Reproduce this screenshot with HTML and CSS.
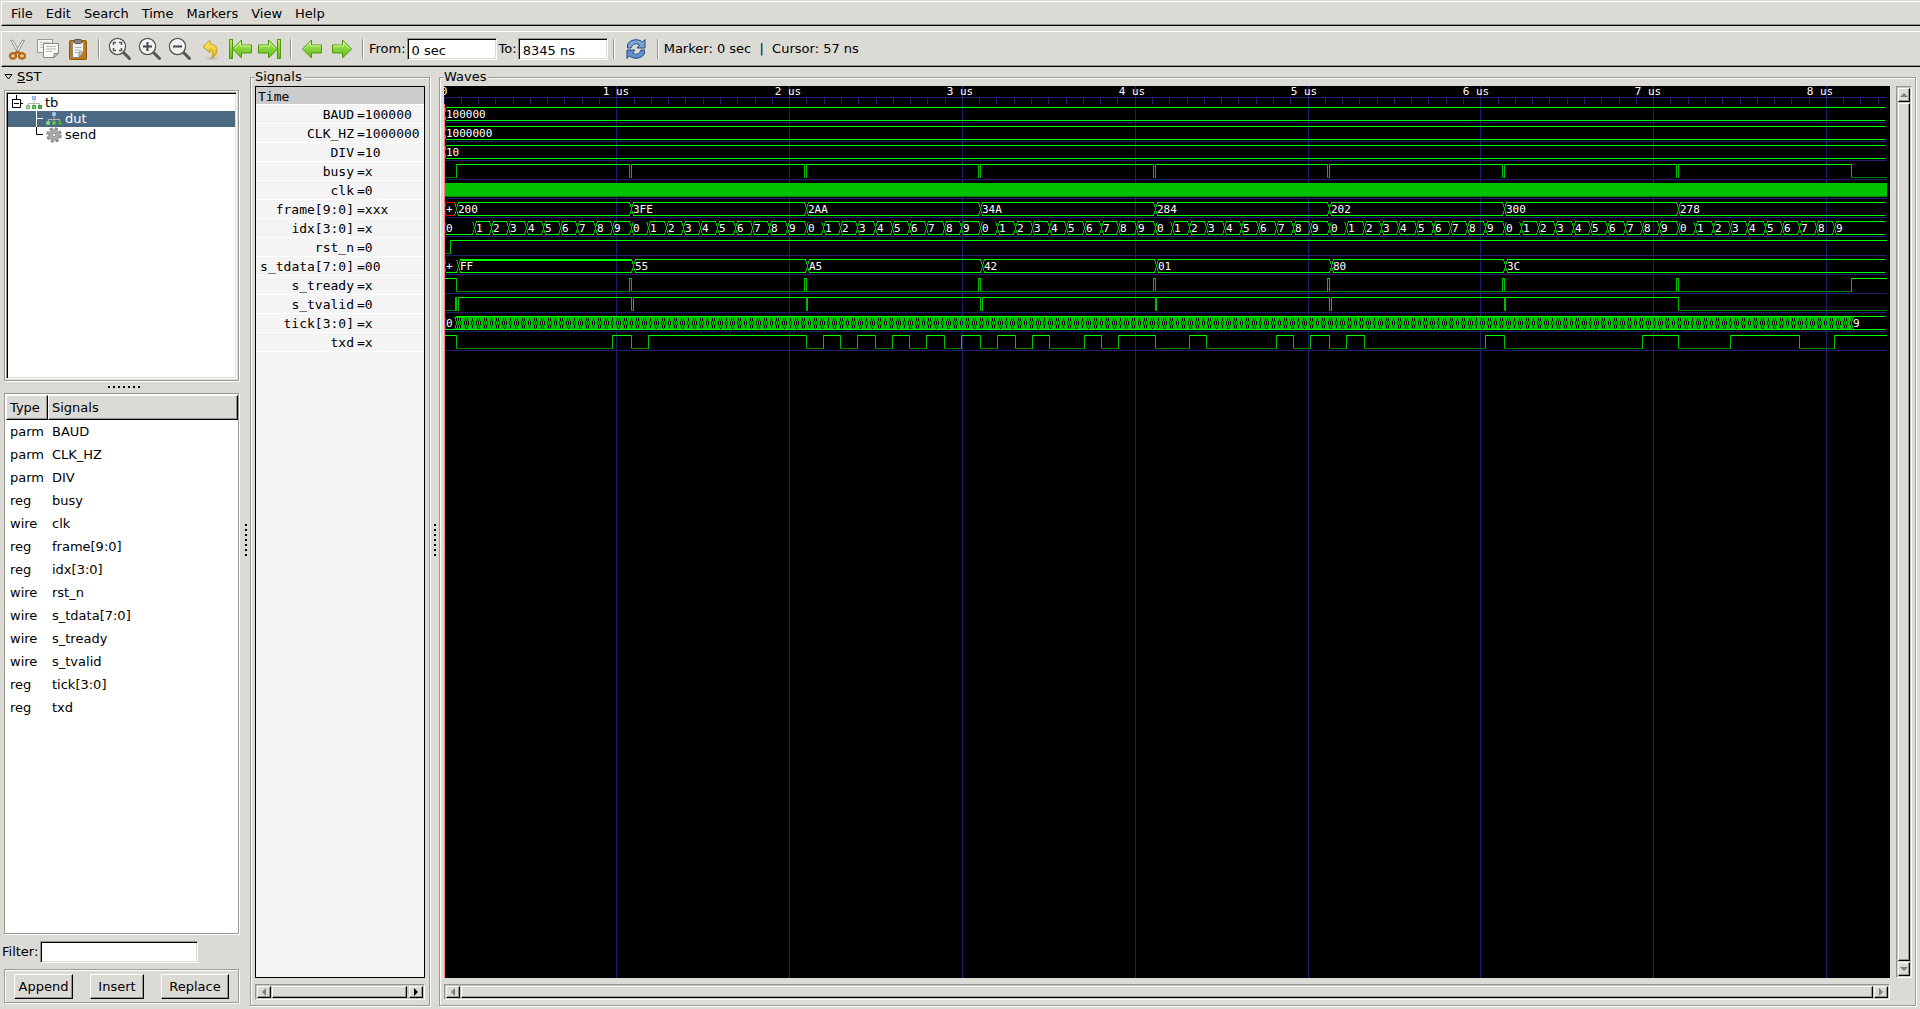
FILE: index.html
```html
<!DOCTYPE html>
<html lang="en">
<head>
    <meta charset="UTF-8">
    <title>GTKWave</title>
    <link rel="stylesheet" href="styles.css">
</head>
<body>

<!-- shared icon shapes -->
<svg class="defs" aria-hidden="true">
    <defs>
        <linearGradient id="green" x1="0" y1="0" x2="0" y2="1">
            <stop offset="0" stop-color="#b4f05c"/>
            <stop offset="1" stop-color="#5cb81c"/>
        </linearGradient>
        <linearGradient id="gold" x1="0" y1="0" x2="0" y2="1">
            <stop offset="0" stop-color="#fdf07c"/>
            <stop offset="1" stop-color="#e0a800"/>
        </linearGradient>
        <symbol id="arrow" viewBox="0 0 24 24">
            <path d="M2.500 12 L11.500 3 V8 H21.500 V16 H11.500 V21 Z" fill="url(#green)" stroke="#4e9a06"/>
            <path d="M4.500 11.500 L10.500 5.500 V9 H20.500" fill="none" stroke="#d4f8a0"/>
        </symbol>
        <symbol id="lens" viewBox="0 0 24 24">
            <path d="M15 15 L21.500 21.500" stroke="#555753" stroke-width="3" stroke-linecap="round"/>
            <circle cx="9.500" cy="9.500" r="8" fill="#f0f0ee" stroke="#555753" stroke-width="1.500"/>
            <circle cx="9.500" cy="9.500" r="6.700" fill="none" stroke="#fff"/>
        </symbol>
        <symbol id="tree" viewBox="0 0 16 16">
            <path d="M8 5 V8 M2.500 10 V8.500 H13.500 V10 M8 8 V10" fill="none" stroke="#b4b6b2"/>
            <rect x="6.500" y="1.500" width="3" height="3" fill="#b4d4f8" stroke="#8cb4e4"/>
            <rect x="0.500" y="10.500" width="3" height="3" fill="#a4dc94" stroke="#74bc6c"/>
            <rect x="6.500" y="10.500" width="3" height="3" fill="#74c46c" stroke="#4ca44c"/>
            <rect x="12.500" y="10.500" width="3" height="3" fill="#54b454" stroke="#3c943c"/>
        </symbol>
    </defs>
</svg>

<nav class="menubar">
    <button>File</button>
    <button>Edit</button>
    <button>Search</button>
    <button>Time</button>
    <button>Markers</button>
    <button>View</button>
    <button>Help</button>
</nav>

<div class="toolbar">
    <button class="tool" aria-label="Cut">
        <svg viewBox="0 0 24 24">
            <path d="M4.500 3 L7 3.500 L14.500 16 L12.500 17 Z" fill="#eee" stroke="#999b97"/>
            <path d="M18.500 3 L16 3.500 L9 16 L11 17 Z" fill="#fff" stroke="#888a85"/>
            <ellipse cx="7" cy="19" rx="3" ry="2.700" fill="none" stroke="#b86c10" stroke-width="2.500"/>
            <ellipse cx="16" cy="19" rx="3" ry="2.700" fill="none" stroke="#b86c10" stroke-width="2.500"/>
            <path d="M9 16.500 L11.500 14.500 L14 16.500" fill="none" stroke="#b86c10" stroke-width="2"/>
        </svg>
    </button>
    <button class="tool" aria-label="Copy">
        <svg viewBox="0 0 24 24">
            <rect x="1.500" y="2.500" width="15" height="13" fill="#f4f4f2" stroke="#999b97"/>
            <path d="M4 5.500 H14 M4 8 H14 M4 10.500 H14" stroke="#c4c6c2"/>
            <path d="M7.500 6.500 H22.500 V16.500 L18 20.500 H7.500 Z" fill="#f8f8f6" stroke="#888a85"/>
            <path d="M10 9.500 H20 M10 12 H20 M10 14.500 H16" stroke="#b4b6b2"/>
            <path d="M22.500 16.500 H18 V20.500 Z" fill="#ccc" stroke="#888a85"/>
        </svg>
    </button>
    <button class="tool" aria-label="Paste">
        <svg viewBox="0 0 24 24">
            <rect x="3.500" y="3.500" width="17" height="19" rx="1" fill="#c07818" stroke="#8f5902"/>
            <path d="M6.500 5.500 H17.500 V15 L13 20.500 H6.500 Z" fill="#f4f4f2" stroke="#888a85"/>
            <rect x="8.500" y="2.500" width="7" height="4" rx="1" fill="#888a85" stroke="#555753"/>
            <path d="M9 10.500 H15.500 M9 13 H15.500 M9 15.500 H12" stroke="#b4b6b2"/>
            <path d="M17.500 15 H13 V20.500 Z" fill="#ccc" stroke="#888a85"/>
        </svg>
    </button>
    <span class="sep"></span>
    <button class="tool" aria-label="Zoom fit">
        <svg viewBox="0 0 24 24">
            <use href="#lens"/>
            <path d="M5.500 8 V5.500 H8 M11 5.500 H13.500 V8 M13.500 11 V13.500 H11 M8 13.500 H5.500 V11" fill="none" stroke="#555753" stroke-width="1.500"/>
        </svg>
    </button>
    <button class="tool" aria-label="Zoom in">
        <svg viewBox="0 0 24 24">
            <use href="#lens"/>
            <path d="M5 9.500 H14 M9.500 5 V14" stroke="#44464a" stroke-width="2"/>
        </svg>
    </button>
    <button class="tool" aria-label="Zoom out">
        <svg viewBox="0 0 24 24">
            <use href="#lens"/>
            <path d="M5 9.500 H14" stroke="#44464a" stroke-width="2"/>
        </svg>
    </button>
    <button class="tool" aria-label="Undo zoom">
        <svg viewBox="0 0 24 24">
            <ellipse cx="14" cy="21.500" rx="6" ry="1.500" fill="#c4c2bc"/>
            <path d="M5 9.500 L12 3.500 V7 C18 7 20 12 18.500 16 C17.500 19 15 20.500 13 21 C15.500 17.500 15.500 12.500 12 12.500 V16 Z" fill="url(#gold)" stroke="#c89c10"/>
        </svg>
    </button>
    <button class="tool" aria-label="Zoom to start">
        <svg viewBox="0 0 24 24">
            <rect x="1.500" y="2.500" width="3" height="19" fill="url(#green)" stroke="#4e9a06"/>
            <use href="#arrow" x="2"/>
        </svg>
    </button>
    <button class="tool" aria-label="Zoom to end">
        <svg viewBox="0 0 24 24">
            <g transform="matrix(-1 0 0 1 24 0)">
                <rect x="1.500" y="2.500" width="3" height="19" fill="url(#green)" stroke="#4e9a06"/>
                <use href="#arrow" x="2"/>
            </g>
        </svg>
    </button>
    <span class="sep"></span>
    <button class="tool" aria-label="Find previous edge">
        <svg viewBox="0 0 24 24"><use href="#arrow"/></svg>
    </button>
    <button class="tool" aria-label="Find next edge">
        <svg viewBox="0 0 24 24"><use href="#arrow" transform="matrix(-1 0 0 1 24 0)"/></svg>
    </button>
    <span class="sep"></span>
    <label for="from">From:</label>
    <input class="entry" id="from" type="text" value="0 sec">
    <label class="to" for="to">To:</label>
    <input class="entry" id="to" type="text" value="8345 ns">
    <span class="sep"></span>
    <button class="tool reload" aria-label="Reload">
        <svg viewBox="0 0 24 24">
            <path d="M3.500 11 V8 C5 2.500 14 1 18.500 5 L21 2.500 V11 H13 L15.500 8 C12 5.500 8.500 7 7 11 Z" fill="#7ca4d4" stroke="#204a87"/>
            <path d="M20.500 13 V16 C19 21.500 10 23 5.500 19 L3 21.500 V13 H11 L8.500 16 C12 18.500 15.500 17 17 13 Z" fill="#6490c8" stroke="#204a87"/>
        </svg>
    </button>
    <span class="sep"></span>
    <span class="status">Marker: 0 sec&nbsp; |&nbsp; Cursor: 57 ns</span>
</div>

<main class="panes">
    <section class="side">
        <button class="expander">
            <svg viewBox="0 0 9 8"><path d="M1 1.500 H8 L4.500 6 Z" fill="#dcdad5" stroke="#000"/></svg>
            <span><u>S</u>ST</span>
        </button>
        <div class="frame tree_frame">
            <div class="tree">
                <div class="node">
                    <svg class="lines" viewBox="0 0 17 16"><path d="M7.500 0 V4 M3.500 4.500 H11.500 V12.500 H3.500 V4 M5 8.500 H10 M12 8.500 H14" fill="none" stroke="#000"/></svg>
                    <svg class="icon"><use href="#tree"/></svg>
                    <span>tb</span>
                </div>
                <div class="node child selected">
                    <svg class="lines" viewBox="0 0 17 16"><path d="M7.500 0 V16 M8 7.500 H14" fill="none" stroke="#fff"/></svg>
                    <svg class="icon"><use href="#tree"/></svg>
                    <span>dut</span>
                </div>
                <div class="node child">
                    <svg class="lines" viewBox="0 0 17 16"><path d="M7.500 0 V7.500 H14" fill="none" stroke="#000"/></svg>
                    <svg class="icon" viewBox="0 0 16 16">
                        <circle cx="8" cy="8" r="6.500" fill="none" stroke="#888a85" stroke-width="2.500" stroke-dasharray="3.100 2"/>
                        <circle cx="8" cy="8" r="4.500" fill="#c4c4c2" stroke="#a4a6a0" stroke-width="3"/>
                        <circle cx="8" cy="8" r="2" fill="#f4f4f2" stroke="#777"/>
                    </svg>
                    <span>send</span>
                </div>
            </div>
        </div>
        <div class="grip horizontal"></div>
        <div class="frame list_frame">
            <table class="list">
                <thead>
                    <tr><th class="type">Type</th><th>Signals</th></tr>
                </thead>
                <tbody>
                    <tr><td>parm</td><td>BAUD</td></tr>
                    <tr><td>parm</td><td>CLK_HZ</td></tr>
                    <tr><td>parm</td><td>DIV</td></tr>
                    <tr><td>reg</td><td>busy</td></tr>
                    <tr><td>wire</td><td>clk</td></tr>
                    <tr><td>reg</td><td>frame[9:0]</td></tr>
                    <tr><td>reg</td><td>idx[3:0]</td></tr>
                    <tr><td>wire</td><td>rst_n</td></tr>
                    <tr><td>wire</td><td>s_tdata[7:0]</td></tr>
                    <tr><td>wire</td><td>s_tready</td></tr>
                    <tr><td>wire</td><td>s_tvalid</td></tr>
                    <tr><td>reg</td><td>tick[3:0]</td></tr>
                    <tr><td>reg</td><td>txd</td></tr>
                </tbody>
            </table>
        </div>
        <div class="filter">
            <label for="filter">Filter:</label>
            <input class="entry" id="filter" type="text">
        </div>
        <div class="frame actions">
            <button class="btn append">Append</button>
            <button class="btn insert">Insert</button>
            <button class="btn replace">Replace</button>
        </div>
    </section>

    <div class="grip vertical first"></div>

    <section class="frame panel signals">
        <h2>Signals</h2>
        <div class="names">
            <div class="time">Time</div>
            <div class="row"><span>BAUD</span><span>=100000</span></div>
            <div class="row"><span>CLK_HZ</span><span>=1000000</span></div>
            <div class="row"><span>DIV</span><span>=10</span></div>
            <div class="row"><span>busy</span><span>=x</span></div>
            <div class="row"><span>clk</span><span>=0</span></div>
            <div class="row"><span>frame[9:0]</span><span>=xxx</span></div>
            <div class="row"><span>idx[3:0]</span><span>=x</span></div>
            <div class="row"><span>rst_n</span><span>=0</span></div>
            <div class="row"><span>s_tdata[7:0]</span><span>=00</span></div>
            <div class="row"><span>s_tready</span><span>=x</span></div>
            <div class="row"><span>s_tvalid</span><span>=0</span></div>
            <div class="row"><span>tick[3:0]</span><span>=x</span></div>
            <div class="row"><span>txd</span><span>=x</span></div>
        </div>
        <div class="scroll">
            <button class="step off" aria-label="Left"><svg viewBox="0 0 8 8"><path d="M6 0 V8 L2 4 Z"/></svg></button>
            <div class="thumb short"></div>
            <button class="step" aria-label="Right"><svg viewBox="0 0 8 8"><path d="M2 0 V8 L6 4 Z"/></svg></button>
        </div>
    </section>

    <div class="grip vertical"></div>

    <section class="frame panel waves">
        <h2>Waves</h2>
        <div class="wave_row">
            <svg class="canvas" id="canvas"></svg>
            <div class="scroll upright">
                <button class="step off" aria-label="Up"><svg viewBox="0 0 8 8"><path d="M0 6 H8 L4 2 Z"/></svg></button>
                <div class="thumb"></div>
                <button class="step off" aria-label="Down"><svg viewBox="0 0 8 8"><path d="M0 2 H8 L4 6 Z"/></svg></button>
            </div>
        </div>
        <div class="scroll">
            <button class="step off" aria-label="Left"><svg viewBox="0 0 8 8"><path d="M6 0 V8 L2 4 Z"/></svg></button>
            <div class="thumb"></div>
            <button class="step off" aria-label="Right"><svg viewBox="0 0 8 8"><path d="M2 0 V8 L6 4 Z"/></svg></button>
        </div>
    </section>
</main>

<script src="waves.js"></script>
</body>
</html>
```

FILE: styles.css
```css
* {
    box-sizing: border-box;
}
body {
    margin: 0;
    height: 100vh;
    display: flex;
    flex-direction: column;
    padding: 1px 0 3px 0;
    background: #dcdad5;
    color: #000;
    font: 13px/16px "DejaVu Sans", sans-serif;
    overflow: hidden;
}
button, input {
    font: inherit;
    color: inherit;
    margin: 0;
    padding: 0;
    border: 0;
    border-radius: 0;
    background: none;
}
svg {
    display: block;
}
.defs {
    position: absolute;
    width: 0;
    height: 0;
}

/* menu and tool bars */
.menubar, .toolbar {
    display: flex;
    align-items: center;
    margin-left: 1px;
    border-top: 1px solid #fff;
    border-left: 1px solid #fff;
    border-bottom: 1px solid #000;
    box-shadow: inset 0 -1px #96948e;
}
.menubar {
    height: 25px;
    padding-left: 3px;
}
.menubar button {
    padding: 0 7px 0 6px;
    line-height: 22px;
}
.toolbar {
    height: 36px;
    margin-top: 5px;
    padding-left: 1px;
}
.toolbar label {
    padding-right: 1px;
}
.tool {
    width: 30px;
    display: flex;
    justify-content: center;
}
.tool svg {
    width: 24px;
    height: 24px;
}
.reload {
    width: 32px;
}
.sep {
    width: 2px;
    height: 20px;
    margin: 0 5px;
    border-left: 1px solid #96948e;
    border-right: 1px solid #fff;
}
.entry {
    width: 90px;
    height: 22px;
    padding: 2px 4px 0 4px;
    background: #fff;
    border: 1px solid;
    border-color: #96948e #fff #fff #96948e;
    box-shadow: inset 1px 1px #000, inset -1px -1px #dcdad5;
}
.to {
    padding-left: 2px;
}

/* etched frame */
.frame {
    position: relative;
    border: 1px solid #9c9a94;
    box-shadow: 1px 1px #fff, inset 1px 1px #fff;
}
.panes {
    flex: 1;
    min-height: 0;
    display: flex;
    padding: 3px 4px 0 4px;
}
.side {
    width: 235px;
    display: flex;
    flex-direction: column;
    padding-bottom: 3px;
}
.expander {
    display: flex;
    align-items: center;
    gap: 4px;
    height: 20px;
    line-height: 14px;
    padding-bottom: 6px;
}
.expander svg {
    width: 9px;
    height: 8px;
}
.tree_frame {
    height: 291px;
    padding: 1px;
}
.tree {
    height: 100%;
    padding: 2px 1px 1px 1px;
    background: #fff;
    border: 1px solid;
    border-color: #96948e #fff #fff #96948e;
    box-shadow: inset 1px 1px #000, inset -1px -1px #dcdad5;
}
.node {
    display: flex;
    align-items: center;
    height: 16px;
    padding-left: 1px;
}
.node svg {
    height: 16px;
}
.lines {
    width: 17px;
}
.icon {
    width: 16px;
    margin-right: 3px;
}
.child {
    padding-left: 21px;
}
.selected {
    background: #4b6983;
    color: #fff;
}
.list_frame {
    flex: 1;
    padding: 1px 0 0 1px;
    background: #fff;
}
.list {
    width: 100%;
    border-spacing: 0;
}
.list th {
    height: 25px;
    padding: 0 0 0 3px;
    font-weight: normal;
    text-align: left;
    background: #dcdad5;
    border: 1px solid;
    border-color: #fff #000 #000 #fff;
    box-shadow: inset -1px -1px #96948e;
}
.list .type {
    width: 42px;
}
.list td {
    height: 23px;
    padding: 0 0 0 4px;
}
.filter {
    display: flex;
    align-items: center;
    gap: 2px;
    margin: 7px 0 6px -2px;
}
.filter .entry {
    width: 158px;
}
.actions {
    display: flex;
    height: 34px;
    padding: 4px 9px;
    justify-content: space-between;
}
.btn {
    height: 25px;
    border: 1px solid;
    border-color: #fff #000 #000 #fff;
    box-shadow: inset -1px -1px #96948e;
}
.append {
    width: 59px;
}
.insert {
    width: 54px;
}
.replace {
    width: 68px;
}

/* pane handles */
.grip {
    flex: none;
}
.grip::before {
    content: '';
    display: block;
}
.vertical {
    width: 9px;
    padding-top: 3px;
    display: flex;
    align-items: center;
    justify-content: center;
}
.first {
    width: 11px;
    padding-left: 2px;
}
.vertical::before {
    width: 2px;
    height: 32px;
    background: repeating-linear-gradient(#000 0 2px, transparent 2px 5px);
}
.horizontal {
    height: 12px;
    padding: 5px 0 0 4px;
}
.horizontal::before {
    width: 32px;
    height: 2px;
    margin: 0 auto;
    background: repeating-linear-gradient(90deg, #000 0 2px, transparent 2px 5px);
}

/* signals and waves */
.panel {
    display: flex;
    flex-direction: column;
    gap: 6px;
    margin-top: 7px;
    padding: 8px 4px 5px 4px;
}
.panel h2 {
    position: absolute;
    top: -9px;
    left: 4px;
    margin: 0;
    padding-right: 2px;
    font: inherit;
    background: #dcdad5;
}
.signals {
    width: 180px;
}
.waves {
    flex: 1;
    min-width: 0;
    padding-right: 3px;
}
.names {
    flex: 1;
    border: 1px solid #000;
    background: #f4f4f4;
    font-family: "DejaVu Sans Mono", monospace;
}
.time {
    height: 18px;
    padding-left: 2px;
    line-height: 20px;
    background: #ccc;
    border-bottom: 1px solid #fff;
}
.row {
    display: grid;
    grid-template-columns: 98px 1fr;
    gap: 3px;
    height: 19px;
    line-height: 20px;
    border-bottom: 1px solid #fff;
}
.row span:first-child {
    text-align: right;
}
.wave_row {
    flex: 1;
    min-height: 0;
    display: flex;
    gap: 6px;
}
.canvas {
    flex: 1;
    min-width: 0;
    height: 100%;
    background: #000;
    fill: #fff;
    font: 11px "DejaVu Sans Mono", monospace;
}
.scroll {
    display: flex;
    height: 16px;
    padding: 1px;
    gap: 1px;
    background: #c8c6c0;
    border: 1px solid;
    border-color: #96948e #fff #fff #96948e;
}
.upright {
    flex-direction: column;
    width: 16px;
    height: auto;
}
.waves > .scroll {
    margin-right: 22px;
}
.step, .thumb {
    background: #dcdad5;
    border: 1px solid;
    border-color: #fff #000 #000 #fff;
    box-shadow: inset -1px -1px #96948e;
}
.step {
    flex: none;
    width: 14px;
    height: 100%;
    display: flex;
    align-items: center;
    justify-content: center;
}
.step svg {
    width: 8px;
    height: 8px;
}
.off {
    fill: #807e78;
}
.upright .step {
    width: 100%;
    height: 14px;
}
.thumb {
    flex: 1;
}
.short {
    margin-right: 1px;
}
```

FILE: waves.js
```js
const canvas = document.getElementById('canvas');
const SCALE = 0.1728;   // pixels per ns
const END = 1443;       // last drawn column
const ROW = 19;
const frames = ['200', '3FE', '2AA', '34A', '284', '202', '300', '278'];
const bytes = ['FF', '55', 'A5', '42', '01', '80', '3C'];

const GRID = '#202070', HI = '#00ff00', EDGE = '#00c000', LO = '#008000', RED = '#ff0000';

let paths = {}, order = [], texts = [];

function px(t) {
    return Math.floor(t * SCALE);
}
function box(color, x, y, w, h) {
    if (!paths[color]) {
        paths[color] = '';
        order.push(color);
    }
    paths[color] += 'M' + x + ' ' + y + 'h' + w + 'v' + h + 'h' + -w + 'z';
}
function text(x, y, str, anchor) {
    texts.push('<text x="' + x + '" y="' + y + '" text-anchor="' + (anchor || 'start') + '">' + str + '</text>');
}
function rowTop(row) {
    return 21 + row * ROW;
}
// edges is a list of times where the level flips
function bit(row, level, edges) {
    let x = 1, y = rowTop(row);
    for (const t of edges.concat(null)) {
        let next = t === null ? END : px(t);
        box(level ? HI : LO, x, level ? y : y + 13, next - x, 1);
        if (t !== null) {
            box(EDGE, next, y, 1, 14);
        }
        level = !level;
        x = next;
    }
}
function cross(x, y, color) {
    for (const s of [-1, 1]) {
        box(color, x + 2 * s, y + 1, 1, 1);
        box(color, x + s, y + 2, 1, 3);
        box(color, x + s, y + 9, 1, 3);
        box(color, x + 2 * s, y + 12, 1, 1);
    }
    box(color, x, y + 5, 1, 4);
}
// values: [time, text, kind]
function bus(row, values) {
    const y = rowTop(row);
    values.forEach(function (v, i) {
        const last = i === values.length - 1;
        const a = px(v[0]), b = last ? END - 1 : px(values[i + 1][0]);
        const color = v[2] === 'x' ? RED : HI;
        box(color, a + 2, y + 13, b - a - 3, 1);
        if (v[2] !== 'zero') {
            box(color, a + 2, y, b - a - 3, v[2] === 'ones' ? 2 : 1);
        }
        if (i) {
            cross(a, y, EDGE);
        } else {
            box(v[2] ? RED : EDGE, 1, y + 1, 1, 4);
            box(v[2] ? RED : EDGE, 1, y + 9, 1, 4);
        }
        text(a + 2, y + 11, v[1]);
    });
}

// time axis, labels sit on a rounded step so they drift off the lines
box(GRID, 0, 11, END, 1);
for (let t = 0; t <= 8300; t += 100) {
    box(GRID, px(t), 11, 1, 7);
}
for (let us = 0; us <= 8; us++) {
    box(GRID, px(us * 1000), us ? 0 : 11, 1, us ? 2000 : 7);
    text(us * 172, 9, us ? us + ' us' : '0', 'middle');
}
for (let r = 0; r < 13; r++) {
    box(GRID, 1, rowTop(r) + 15, END - 1, 1);
}

const start = frames.map((f, i) => 75 + 1010 * i);

bus(0, [[0, '100000']]);
bus(1, [[0, '1000000']]);
bus(2, [[0, '10']]);

let ready = [75];
start.slice(1).forEach(s => ready.push(s - 10, s));
ready.push(8145);
bit(3, 0, ready);

// clk is denser than a pixel
box(EDGE, 1, rowTop(4), END - 1, 14);
box(HI, 1, rowTop(4), END - 1, 1);
box(LO, 1, rowTop(4) + 13, END - 1, 1);

bus(5, [[0, '+', 'x']].concat(frames.map((f, i) => [start[i], f])));

let idx = [[0, '0', 'zero']];
start.forEach(function (s, i) {
    for (let k = i ? 0 : 1; k < 10; k++) {
        idx.push([s + 100 * k, String(k), k ? '' : 'zero']);
    }
});
bus(6, idx);
bit(7, 0, [37]);
bus(8, [[0, '+', 'zero']].concat(bytes.map((b, i) => [start[i] + 10, b, i ? '' : 'ones'])));
bit(9, 1, ready);

let valid = [65, 75, 85];
start.slice(1, 7).forEach(s => valid.push(s, s + 10));
valid.push(start[7]);
bit(10, 0, valid);

// tick counts every clock, so the crossings run together
const ty = rowTop(11);
box(HI, 1, ty + 13, 1440, 1);
box(HI, 12, ty, 1429, 1);
box(RED, 1, ty + 1, 1, 4);
box(RED, 1, ty + 9, 1, 4);
text(2, ty + 11, '0');
for (let t = 75; t <= 8145; t += 10) {
    cross(px(t), ty, EDGE);
    box(EDGE, px(t) - 1, ty + 1, 1, 1);
    box(EDGE, px(t), ty + 12, 1, 1);
}
text(px(8145) + 2, ty + 11, '9');

// txd shifts each frame out, lsb first
let line = 1, flips = [];
frames.forEach(function (f, i) {
    const v = parseInt(f, 16);
    for (let k = 0; k < 10; k++) {
        if ((v >> k & 1) !== line) {
            line = v >> k & 1;
            flips.push(start[i] + 100 * k);
        }
    }
});
bit(12, 1, flips);

// marker
box('#ff8080', 0, 18, 1, 2000);

canvas.innerHTML = '<g shape-rendering="crispEdges">' +
    order.map(c => '<path fill="' + c + '" d="' + paths[c] + '"/>').join('') +
    '</g>' + texts.join('');
```
